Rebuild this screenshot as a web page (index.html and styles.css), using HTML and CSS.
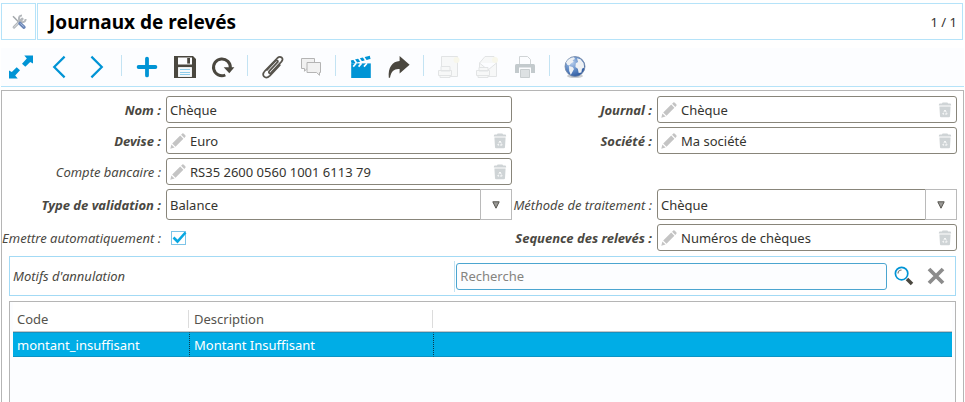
FILE: index.html
```html
<!DOCTYPE html>
<html lang="fr">
<head>
<meta charset="utf-8">
<title>Journaux de relevés</title>
<link rel="stylesheet" href="styles.css">
</head>
<body>
<svg class="defs" aria-hidden="true">
  <symbol id="pencil" viewBox="0 0 16 16">
    <path fill="#c4c4c4" d="M0.3 15.7 1.4 11.4 4.6 14.6ZM2.2 10.5 10.2 2.6 13.4 5.8 5.5 13.8ZM11.1 1.7 12.3.6Q13 0 13.8.7L15.3 2.2Q16 3 15.4 3.7L14.3 4.9Z"/>
  </symbol>
  <symbol id="trash" viewBox="0 0 14 16">
    <path fill="#cfd4d6" d="M4 1.6Q4 .6 5 .6H9Q10 .6 10 1.6H12.3Q13.2 1.6 13.2 3.6H.8Q.8 1.6 1.7 1.6ZM1.4 4.6H12.6L12 14.2Q11.9 15.2 11 15.2H3Q2.1 15.2 2 14.2Z"/>
    <path fill="none" stroke="#fff" stroke-width="1" stroke-linejoin="round" stroke-dasharray="2.8 1" d="M7 8 9.2 12H4.8Z"/>
  </symbol>
  <symbol id="arrow" viewBox="0 0 8 8">
    <path fill="#9b9a97" stroke="#55534d" d="M.8 .8H7.2L4 7.2Z"/>
  </symbol>
</svg>

<header class="titlebar">
  <button class="menu" aria-label="Outils">
    <svg width="16" height="16" viewBox="0 0 16 16">
      <path d="M2 2.2 8.6 9" stroke="#a3a7ab" stroke-width="1.5"/>
      <path d="M3 13.3 11.2 5" stroke="#b4b8bc" stroke-width="2.8" stroke-linecap="round"/>
      <path d="M11 1.4A3.4 3.4 0 1 0 14.7 5" fill="none" stroke="#b4b8bc" stroke-width="1.9"/>
      <path d="M3 13.4 8 8.3" stroke="#dfe2e5" stroke-width="1"/>
      <path d="M9 9.4 13 13.2" stroke="#6b87b8" stroke-width="3.4" stroke-linecap="round"/>
      <path d="M9.4 9.4 12.8 12.6" stroke="#a9bddd" stroke-width="1"/>
    </svg>
  </button>
  <div class="heading">
    <h1>Journaux de relevés</h1>
    <span>1 / 1</span>
  </div>
</header>

<nav class="toolbar">
  <button aria-label="Agrandir">
    <svg viewBox="0 0 24 24" fill="#0094d5"><path d="M15.3.5H24V8.4L21.2 7 16.3 11.7 13 8.8 17.8 3.6Z"/><path d="M8.7 23.5H0V15.6L2.8 17 7.7 12.3 11 15.2 6.2 20.4Z"/></svg>
  </button>
  <button aria-label="Précédent">
    <svg viewBox="0 0 24 24" fill="none" stroke="#0094d5" stroke-width="2.2"><path d="M17.6 1.6 7.2 12 17.6 22.4"/></svg>
  </button>
  <button aria-label="Suivant">
    <svg viewBox="0 0 24 24" fill="none" stroke="#0094d5" stroke-width="2.2"><path d="M6.4 1.6 16.8 12 6.4 22.4"/></svg>
  </button>
  <i></i>
  <button aria-label="Nouveau">
    <svg viewBox="0 0 24 24" stroke="#0094d5" stroke-width="3.8" stroke-linecap="round"><path d="M12 3.6V20.4M3.6 12H20.4"/></svg>
  </button>
  <button aria-label="Enregistrer">
    <svg viewBox="0 0 24 24"><path fill="#4a473f" fill-rule="evenodd" d="M1 1H20L23 4V23H1ZM5 2.4V9.6H19V2.4Z M5.2 12.3V21.8H18.8V12.3Z"/><path fill="#4a473f" d="M14.2 3H17V8.6H14.2Z"/><path fill="#f5f8fa" d="M5.2 12.3H18.8V21.8H5.2Z"/><path stroke="#8fcdeb" d="M7 14.5H17M7 17.5H17M7 19.5H17"/></svg>
  </button>
  <button aria-label="Recharger">
    <svg viewBox="0 0 24 24"><path fill="none" stroke="#4a473f" stroke-width="3" d="M14.3 20A8.4 8.4 0 1 1 19.3 13"/><path fill="#4a473f" d="M12.7 12.3H23.4L18.3 18.2Z"/></svg>
  </button>
  <i></i>
  <button aria-label="Pièces jointes">
    <svg viewBox="0 0 24 24" fill="none" stroke="#57544d" stroke-width="1.7" stroke-linecap="round" stroke-linejoin="round"><path d="M16.6 7.1 8.2 16.2C7 17.6 8.8 19.1 10.2 17.7L20.5 6.6C23.2 3.3 19.5.2 16.4 3L4 15.8C-.3 20.7 4.4 25 9 20.6L18.8 10.2"/><path d="M16.6 7.1C17.6 5.8 15.7 4.6 14.5 6L6 15"/></svg>
  </button>
  <button aria-label="Notes">
    <svg viewBox="0 0 24 24" fill="#f1f1f1" stroke="#b4b4b4"><path d="M2.5 3.5H15.5V13.5H8L5.5 16.3V13.5H2.5Z"/><path d="M8 7.5H21.5V17.5H20.5V20.3L17.6 17.5H8Z"/></svg>
  </button>
  <i></i>
  <button aria-label="Actions">
    <svg viewBox="0 0 24 24"><path fill="#0094d5" d="M2.2 8.4H21.8V23H2.2Z"/><path fill="#0094d5" d="M1.8 5.4 20.8.8 21.6 4.2 2.6 8.8Z"/><path stroke="#fcfdff" stroke-width="1.7" d="M4.6 3.8 7.6 8M9.4 2.6 12.4 7M14.2 1.4 17.2 6M7.2 8.2 4.2 11.6M12.6 8.2 9.6 11.6M18 8.2 15 11.6M22 4.8 10 7.8"/></svg>
  </button>
  <button aria-label="Relations">
    <svg viewBox="0 0 24 24"><path fill="#4a473f" d="M12.6 1 22.6 9.7 12.6 18.5V14C7.6 13.4 4.2 16 3 22.7L1.8 22.7C.8 12.5 5.4 6.4 12.6 6Z"/></svg>
  </button>
  <i></i>
  <button aria-label="Rapports" disabled>
    <svg viewBox="0 0 24 24" fill="#f7f8f8" stroke="#e2e4e5"><path d="M4.5 1.5H20.5V21.5H4.5Z"/><path d="M4 11.5H13V16H4ZM1.5 15.5H14.5V20.5H1.5ZM3 20.5H13V22.5H3Z"/><circle cx="19.5" cy="5" r="3" fill="#f8f7eb" stroke="none"/></svg>
  </button>
  <button aria-label="Courriel" disabled>
    <svg viewBox="0 0 24 24" fill="#f7f8f8" stroke="#e2e4e5"><path d="M4.5 8 10 1.5H19L21.5 8V21.5H4.5ZM4.5 8 13 15 21.5 8"/><path d="M4 12.5H13V16H4ZM1.5 15.5H14.5V20.5H1.5ZM3 20.5H13V22.5H3Z"/><circle cx="20" cy="5" r="3" fill="#f8f7eb" stroke="none"/></svg>
  </button>
  <button aria-label="Imprimer" disabled>
    <svg viewBox="0 0 24 24"><path fill="#fcfdff" stroke="#d0d4d6" d="M6.5 1.5H14.5L17.5 4.5V10H6.5Z"/><path fill="#c3cacd" d="M3.5 9H20.5Q22 9 22 10.5V18H2V10.5Q2 9 3.5 9Z"/><path fill="#fcfdff" d="M6 12.5H18V23H6Z"/><path fill="#dde1e3" stroke="#c9ced0" d="M7.5 14.5H16.5V22.5H7.5Z"/></svg>
  </button>
  <i></i>
  <button aria-label="Internet">
    <svg viewBox="0 0 24 24"><defs><radialGradient id="sea" cx=".35" cy=".3" r=".75"><stop offset="0" stop-color="#b9d0ee"/><stop offset=".55" stop-color="#5d88c4"/><stop offset="1" stop-color="#2c569c"/></radialGradient></defs><ellipse cx="12" cy="21" rx="8" ry="2" fill="#c9ccd0"/><circle cx="12" cy="11.5" r="10" fill="url(#sea)" stroke="#7286a5" stroke-width=".8"/><path fill="#eef1f4" d="M3 7.5Q6 2.4 11 2.2L12 4 9.6 5.2 10.6 6.8 8 8.5 6.4 10.4 4.5 10ZM6 11 9.6 12 11 14 9 17.8 7.8 20 6.2 16ZM14 3.2 17.5 4.2 20.6 8 21.2 12.5 19 13.8 18.4 17.4 15.7 18 14.8 13.8 12.4 12 12.8 8.2 15 7Z"/></svg>
  </button>
</nav>

<main class="frame">
  <form class="fields">
    <label class="req" for="nom">Nom :</label>
    <div class="field"><input id="nom" type="text" value="Chèque"></div>
    <label class="req" for="journal">Journal :</label>
    <div class="field"><svg class="pen"><use href="#pencil"/></svg><input id="journal" type="text" value="Chèque"><svg class="bin"><use href="#trash"/></svg></div>

    <label class="req" for="devise">Devise :</label>
    <div class="field"><svg class="pen"><use href="#pencil"/></svg><input id="devise" type="text" value="Euro"><svg class="bin"><use href="#trash"/></svg></div>
    <label class="req" for="societe">Société :</label>
    <div class="field"><svg class="pen"><use href="#pencil"/></svg><input id="societe" type="text" value="Ma société"><svg class="bin"><use href="#trash"/></svg></div>

    <label for="compte">Compte bancaire :</label>
    <div class="field"><svg class="pen"><use href="#pencil"/></svg><input id="compte" type="text" value="RS35 2600 0560 1001 6113 79"><svg class="bin"><use href="#trash"/></svg></div>

    <label class="req first" for="type">Type de validation :</label>
    <div class="combo"><select id="type"><option>Balance</option></select><span><svg><use href="#arrow"/></svg></span></div>
    <label for="methode">Méthode de traitement :</label>
    <div class="combo"><select id="methode"><option>Chèque</option></select><span><svg><use href="#arrow"/></svg></span></div>

    <label for="auto">Emettre automatiquement :</label>
    <div class="check"><input id="auto" type="checkbox" checked><svg viewBox="0 0 18 16"><path d="M3.5 6.5 7.5 10.5 15.5 1.5" fill="none" stroke="#08a8e2" stroke-width="2.6"/></svg></div>
    <label class="req" for="sequence">Sequence des relevés :</label>
    <div class="field"><svg class="pen"><use href="#pencil"/></svg><input id="sequence" type="text" value="Numéros de chèques"><svg class="bin"><use href="#trash"/></svg></div>
  </form>

  <div class="search">
    <label for="recherche">Motifs d'annulation</label>
    <input id="recherche" type="text" placeholder="Recherche">
    <button aria-label="Rechercher">
      <svg width="20" height="20" viewBox="0 0 20 20"><path d="M13 13 18 18" stroke="#4a473f" stroke-width="3.6"/><circle cx="7.6" cy="7.6" r="6.2" fill="#fff" stroke="#0094d5" stroke-width="1.7"/><path d="M4 7.6A3.6 3.6 0 0 1 7.6 4" fill="none" stroke="#77746d" stroke-width="1.2"/></svg>
    </button>
    <button aria-label="Effacer">
      <svg width="18" height="18" viewBox="0 0 18 18"><path d="M2 2 16 16M16 2 2 16" stroke="#8c8c8c" stroke-width="3.8"/></svg>
    </button>
  </div>

  <div class="tree">
    <table>
      <colgroup><col class="code"><col class="desc"><col></colgroup>
      <thead><tr><th><span>Code</span></th><th><span>Description</span></th><th></th></tr></thead>
      <tbody><tr><td>montant_insuffisant</td><td>Montant Insuffisant</td><td></td></tr></tbody>
    </table>
  </div>
</main>
</body>
</html>
```

FILE: styles.css
```css
* {
  box-sizing: border-box;
}

body {
  margin: 0;
  height: 100vh;
  padding: 3px 1px 0;
  display: flex;
  flex-direction: column;
  overflow: hidden;
  background: #fff;
  color: #35342f;
  font: 13px/18px "Noto Sans", sans-serif;
}

button {
  display: flex;
  align-items: center;
  justify-content: center;
  padding: 0;
  border: 0;
  background: none;
}

input,
select {
  font: inherit;
  color: inherit;
  margin: 0;
  min-width: 0;
}

.defs {
  position: absolute;
  width: 0;
  height: 0;
}

.titlebar {
  display: flex;
  gap: 1px;
  height: 37px;
  padding-right: 1px;
}

.menu {
  width: 35px;
  border: 1px solid #b5e3f9;
}

.heading {
  flex: 1;
  display: flex;
  align-items: center;
  justify-content: space-between;
  padding: 0 5px 0 11px;
  border: 1px solid #b5e3f9;
}

.heading h1 {
  margin: 0;
  font-size: 19px;
  line-height: 24px;
  color: #000;
}

.toolbar {
  display: flex;
  margin-top: 8px;
  padding-left: 1px;
  border-bottom: 1px solid #b5e3f9;
  background: #fcfdff;
}

.toolbar button {
  width: 38px;
  height: 38px;
}

.toolbar svg {
  width: 24px;
  height: 24px;
}

.toolbar i {
  width: 1px;
  height: 21px;
  margin: 7px 6px 0 5px;
  background: #c3e3f3;
}

.frame {
  flex: 1;
  display: flex;
  flex-direction: column;
  margin-top: 3px;
  padding: 5px 7px 0;
  border: 1px solid #b5b5b5;
  border-bottom: 0;
}

.fields {
  display: grid;
  grid-template-columns: 156px 346fr 135px 300fr;
  gap: 4px 5px;
  align-items: center;
  margin: 0 -1px 0 -4px;
}

.fields label {
  text-align: right;
  white-space: nowrap;
  justify-self: end;
  font-style: italic;
  color: #4a4842;
}

.fields .req {
  font-weight: bold;
}

.fields .first {
  grid-column: 1;
}

.field {
  display: flex;
  align-items: center;
  gap: 4px;
  height: 27px;
  padding: 0 3px;
  border: 1px solid #88857a;
  border-radius: 3px;
}

.field input {
  flex: 1;
  padding: 0;
  border: 0;
  background: none;
}

.pen {
  width: 16px;
  height: 16px;
}

.bin {
  width: 14px;
  height: 16px;
  margin-right: 1px;
}

.combo {
  position: relative;
  height: 31px;
}

.combo select {
  appearance: none;
  width: 100%;
  height: 100%;
  padding: 0 34px 0 3px;
  border: 1px solid #88857a;
  border-radius: 3px 0 0 3px;
  background: #fff;
}

.combo span {
  position: absolute;
  inset: 0 0 0 auto;
  width: 32px;
  display: flex;
  align-items: center;
  justify-content: center;
  border: 1px solid #bababa;
  background: #fff;
  pointer-events: none;
}

.combo svg {
  width: 8px;
  height: 8px;
}

.check {
  position: relative;
  display: flex;
  padding-left: 5px;
}

.check input {
  appearance: none;
  width: 15px;
  height: 14px;
  border: 1px solid #7cc4e8;
  background: #fff;
}

.check svg {
  position: absolute;
  left: 4px;
  top: 0;
  width: 18px;
  height: 16px;
  pointer-events: none;
}

.search {
  display: flex;
  align-items: center;
  height: 40px;
  margin-top: 5px;
  padding: 0 3px;
  border: 1px solid #a3daf5;
}

.search label {
  flex: 449;
  height: 31px;
  margin-right: 1px;
  line-height: 31px;
  font-style: italic;
  color: #4a4842;
  border-right: 1px solid #c3e3f3;
}

.search input {
  flex: 430;
  height: 27px;
  margin-right: 1px;
  padding: 0 3px;
  border: 1px solid #4ba5d0;
  border-radius: 3px;
  background: #fcfdff;
}

.search input::placeholder {
  color: #85847f;
}

.search button {
  width: 32px;
  height: 32px;
}

.tree {
  flex: 1;
  margin-top: 5px;
  padding: 0 3px;
  border: 1px solid #b5b5b5;
  border-bottom: 0;
  background: #fcfdff;
}

.tree table {
  width: 100%;
  table-layout: fixed;
  border-collapse: separate;
  border-spacing: 0;
}

.tree .code {
  width: 176px;
}

.tree .desc {
  width: 244px;
}

.tree th {
  height: 30px;
  padding: 4px 0 0 4px;
  border-bottom: 1px solid #c6c6c6;
  background: #fff;
  font-weight: normal;
  text-align: left;
  color: #55534d;
}

.tree th + th {
  padding-left: 5px;
}

.tree th span {
  display: block;
  border-right: 1px solid #dcdcdc;
}

.tree td {
  height: 25px;
  padding: 0 4px;
  border-top: 1px solid #1a8fbd;
  border-bottom: 1px solid #0b93c4;
  background: #00ade6;
  color: #fff;
}

.tree td + td {
  border-left: 1px dotted #10394a;
}
```
